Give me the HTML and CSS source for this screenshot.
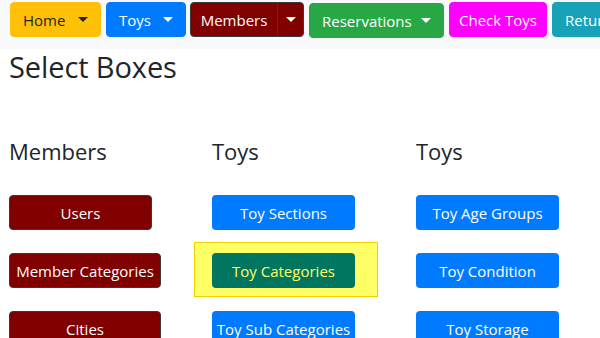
FILE: index.html
```html
<!DOCTYPE html>
<html>
<head>
<meta charset="utf-8">
<link rel="stylesheet" href="styles.css">
</head>
<body>
<nav class="nav">
  <div class="btn btn-home drop">Home <span class="caret"></span></div>
  <div class="btn btn-toys drop">Toys <span class="caret"></span></div>
  <div class="split">
    <div class="btn btn-members split-main">Members</div>
    <div class="btn btn-members split-caret"><span class="caret"></span></div>
  </div>
  <div class="btn btn-res drop">Reservations <span class="caret"></span></div>
  <div class="btn btn-check">Check Toys</div>
  <div class="btn btn-return">Return Toys</div>
</nav>
<main class="main">
  <h1 class="title">Select Boxes</h1>
  <div class="cols">
    <section class="col">
      <h2 class="col-title">Members</h2>
      <div class="list">
        <div class="item"><div class="box box-maroon w142">Users</div></div>
        <div class="item"><div class="box box-maroon w152">Member Categories</div></div>
        <div class="item"><div class="box box-maroon w152">Cities</div></div>
      </div>
    </section>
    <section class="col">
      <h2 class="col-title">Toys</h2>
      <div class="list">
        <div class="item"><div class="box box-blue w143">Toy Sections</div></div>
        <div class="item"><div class="highlight"><div class="box box-teal w143">Toy Categories</div></div></div>
        <div class="item"><div class="box box-blue w143">Toy Sub Categories</div></div>
      </div>
    </section>
    <section class="col">
      <h2 class="col-title">Toys</h2>
      <div class="list">
        <div class="item"><div class="box box-blue w143">Toy Age Groups</div></div>
        <div class="item"><div class="box box-blue w143">Toy Condition</div></div>
        <div class="item"><div class="box box-blue w143">Toy Storage</div></div>
      </div>
    </section>
  </div>
</main>
</body>
</html>
```

FILE: styles.css
```css
* { box-sizing: border-box; }
html, body { margin: 0; padding: 0; }
body {
  font-family: "Open Sans", "Noto Sans", sans-serif;
  color: #212529;
  background: #fff;
  width: 600px;
  height: 338px;
  overflow: hidden;
}
.nav {
  background: #f8f9fa;
  height: 49px;
  display: flex;
  align-items: flex-start;
  gap: 5px;
  padding: 2px 0 0 10px;
  white-space: nowrap;
  overflow: hidden;
}
.btn {
  height: 35px;
  display: flex;
  align-items: center;
  font-size: 15px;
  border-radius: 4px;
  padding: 0 12px;
  border: 1px solid transparent;
  flex-shrink: 0;
  color: #fff;
}
.drop { justify-content: space-between; }
.caret {
  display: inline-block;
  width: 0; height: 0;
  border-top: 5px solid currentColor;
  border-left: 5px solid transparent;
  border-right: 5px solid transparent;
}
.btn-home { background: #ffc107; border-color: #ffc107; color: #212529; width: 91px; }
.btn-toys { background: #007bff; border-color: #007bff; width: 80px; }
.split { display: flex; margin-left: -1px; }
.btn-members { background: #800000; border-color: #343a40; }
.split-main { width: 88px; border-radius: 4px 0 0 4px; justify-content: center; }
.split-caret { width: 27px; border-radius: 0 4px 4px 0; justify-content: center; padding: 0; margin-left: -1px; }
.btn-res { background: #28a745; border-color: #28a745; width: 135px; margin-top: 1px; }
.btn-check { background: #ff00ff; border-color: #ff00ff; width: 98px; justify-content: center; }
.btn-return { background: #17a2b8; border-color: #17a2b8; width: 120px; }

.main { padding: 0 0 0 9px; }
.title {
  margin: 0;
  font-weight: 400;
  font-size: 29px;
  line-height: 36px;
  letter-spacing: -0.1px;
}
.cols {
  display: grid;
  grid-template-columns: 203px 204px 184px;
  margin-top: 52px;
}
.col-title {
  margin: 0;
  font-weight: 400;
  font-size: 22px;
  line-height: 28px;
}
.list {
  display: flex;
  flex-direction: column;
  gap: 23px;
  margin-top: 30px;
}
.item { height: 35px; }
.box {
  height: 35px;
  display: flex;
  align-items: center;
  justify-content: center;
  border-radius: 4px;
  font-size: 15px;
  color: #fff;
  white-space: nowrap;
}
.box-maroon { background: #800000; border: 1px solid #343a40; }
.box-blue { background: #007bff; }
.box-teal { background: #00755f; color: #ffff66; }
.w142 { width: 143px; }
.w143 { width: 143px; }
.w152 { width: 152px; }
.highlight {
  display: inline-block;
  margin: -11px 0 0 -18px;
  padding: 10px 22px 8px 17px;
  background: #ffff66;
  border: 1px solid #f5d000;
}
```
